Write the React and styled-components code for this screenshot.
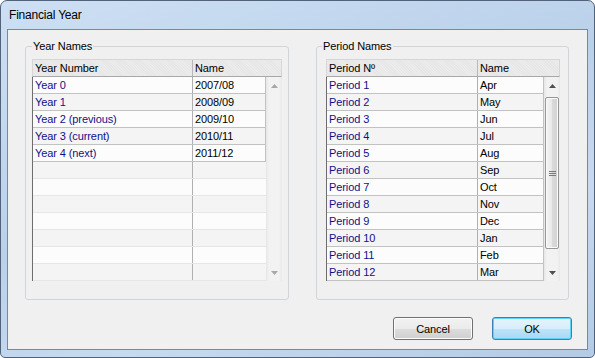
import React from "react";
import styled, { createGlobalStyle } from "styled-components";

const years = [
  ["Year 0", "2007/08"],
  ["Year 1", "2008/09"],
  ["Year 2 (previous)", "2009/10"],
  ["Year 3 (current)", "2010/11"],
  ["Year 4 (next)", "2011/12"],
];

const periods = [
  "Apr", "May", "Jun", "Jul", "Aug", "Sep",
  "Oct", "Nov", "Dec", "Jan", "Feb", "Mar",
].map((m, i) => [`Period ${i + 1}`, m]);

export default function App() {
  return (
    <>
      <GlobalStyle />
      <Window>
        <TitleBar>Financial Year</TitleBar>
        <Client>
          <Panels>
            <GroupBox $w={264} $pl={6}>
              <Legend $ml={0}>Year Names</Legend>
              <Grid
                width={250}
                cols={[160, 73]}
                head={["Year Number", "Name"]}
                rows={years}
              />
            </GroupBox>
            <GroupBox $w={253} $pl={9}>
              <Legend $ml={-4}>Period Names</Legend>
              <Grid
                width={234}
                cols={[151, 66]}
                head={["Period Nº", "Name"]}
                rows={periods}
                thumb
              />
            </GroupBox>
          </Panels>
          <Buttons>
            <Button type="button">Cancel</Button>
            <Button type="button" $default>
              OK
            </Button>
          </Buttons>
        </Client>
      </Window>
    </>
  );
}

function Grid({ width, cols, head, rows, thumb }) {
  const lines = Array.from({ length: 12 }, (_, i) => rows[i] || null);
  return (
    <Table $w={width}>
      <HeaderRow>
        <HeadCell $w={cols[0]}>{head[0]}</HeadCell>
        <HeadCell $last>{head[1]}</HeadCell>
      </HeaderRow>
      <Body>
        <Rows>
          {lines.map((r, i) => (
            <Row key={i} $odd={i % 2 === 1} $filled={!!r}>
              <Cell $w={cols[0]} $key $line>
                {r ? r[0] : ""}
              </Cell>
              <Cell $w={cols[1]} $line={!!r}>
                {r ? r[1] : ""}
              </Cell>
            </Row>
          ))}
        </Rows>
        <ScrollBar>
          <Arrow $active={thumb}>
            <svg width="7" height="4" viewBox="0 0 7 4">
              <path d="M0 4 L3.5 0 L7 4 Z" fill="currentColor" />
            </svg>
          </Arrow>
          <Track>
            {thumb && (
              <Thumb>
                <svg width="7" height="5" viewBox="0 0 7 5">
                  <path d="M0 0.5 H7 M0 2.5 H7 M0 4.5 H7" stroke="#7a7a7a" strokeWidth="1" />
                </svg>
              </Thumb>
            )}
          </Track>
          <Arrow $active={thumb}>
            <svg width="7" height="4" viewBox="0 0 7 4">
              <path d="M0 0 L7 0 L3.5 4 Z" fill="currentColor" />
            </svg>
          </Arrow>
        </ScrollBar>
      </Body>
    </Table>
  );
}

const GlobalStyle = createGlobalStyle`
  html, body {
    margin: 0;
    padding: 0;
    background: #ffffff;
  }
  body {
    font-family: "Liberation Sans", Arial, sans-serif;
    font-size: 11px;
    color: #000;
  }
  * {
    box-sizing: border-box;
  }
`;

const Window = styled.div`
  width: 595px;
  height: 358px;
  display: flex;
  flex-direction: column;
  border: 1px solid #52627a;
  border-radius: 7px 7px 5px 5px;
  background: linear-gradient(160deg, #cddff3 0%, #bad1ea 45%, #c6daef 70%, #b3cbe6 100%);
  overflow: hidden;
`;

const TitleBar = styled.div`
  height: 28px;
  flex: none;
  display: flex;
  align-items: center;
  padding: 0 0 1px 8px;
  font-size: 12px;
  letter-spacing: -0.2px;
`;

const Client = styled.div`
  flex: 1;
  display: flex;
  flex-direction: column;
  margin: 0 6px 7px;
  padding: 10px 15px 0 17px;
  border: 1px solid #7589a2;
  background: #f0f0f0;
`;

const Panels = styled.div`
  display: flex;
  gap: 27px;
`;

const GroupBox = styled.fieldset`
  width: ${(p) => p.$w}px;
  height: 260px;
  margin: 0;
  padding: 6px 0 0 ${(p) => p.$pl}px;
  border: 1px solid #d0d5d9;
  border-radius: 3px;
  min-width: 0;
`;

const Legend = styled.legend`
  margin-left: ${(p) => p.$ml}px;
  padding: 0 1px;
  line-height: 13px;
  letter-spacing: -0.1px;
`;

const Table = styled.div`
  width: ${(p) => p.$w}px;
  display: flex;
  flex-direction: column;
  letter-spacing: -0.1px;
`;

const HeaderRow = styled.div`
  display: flex;
  height: 18px;
  border: 1px solid #d6d6d6;
  border-bottom-color: #a8a8a8;
  background-color: #e9e9e9;
  background-image: repeating-linear-gradient(45deg, #e6e6e6 0 1px, #ececec 1px 2px);
`;

const HeadCell = styled.div`
  ${(p) => (p.$last ? "flex: 1;" : `width: ${p.$w}px;`)}
  padding-left: 2px;
  line-height: 16px;
  ${(p) => (p.$last ? "" : "border-right: 1px solid #b8b8b8;")}
`;

const Body = styled.div`
  display: flex;
  height: 204px;
  border-left: 1px solid #6e6e6e;
`;

const Rows = styled.div`
  display: flex;
  flex-direction: column;
`;

const Row = styled.div`
  display: flex;
  height: 17px;
  border-bottom: 1px solid ${(p) => (p.$filled ? "#c2c2c2" : "#e6e6e6")};
  background: ${(p) => (p.$odd ? "#f4f4f4" : "#fcfcfc")};
`;

const Cell = styled.div`
  width: ${(p) => p.$w}px;
  padding: 0 2px;
  line-height: 16px;
  white-space: nowrap;
  color: ${(p) => (p.$key ? "#10108a" : "#000")};
  border-right: 1px solid ${(p) => (p.$line ? (p.$key ? "#b0b0b0" : "#c2c2c2") : "transparent")};
`;

const ScrollBar = styled.div`
  width: 16px;
  display: flex;
  flex-direction: column;
  background: linear-gradient(90deg, #e6e6e6 0, #f2f2f2 3px, #f2f2f2 13px, #e9e9e9 100%);
`;

const Arrow = styled.div`
  height: 17px;
  display: flex;
  align-items: center;
  justify-content: center;
  color: ${(p) => (p.$active ? "#505050" : "#a8a8a8")};
`;

const Track = styled.div`
  flex: 1;
  padding-top: 3px;
`;

const Thumb = styled.div`
  height: 152px;
  margin: 0 1px;
  display: flex;
  align-items: center;
  justify-content: center;
  border: 1px solid #979797;
  border-radius: 2px;
  background: linear-gradient(90deg, #f4f4f4 0%, #e8e8e8 50%, #dadada 51%, #d2d2d2 100%);
  box-shadow: inset 0 0 0 1px #fafafa;
`;

const Buttons = styled.div`
  display: flex;
  justify-content: flex-end;
  gap: 19px;
  margin-top: 17px;
`;

const Button = styled.button`
  width: 80px;
  height: 23px;
  padding: 0;
  font-family: "Liberation Sans", Arial, sans-serif;
  font-size: 11px;
  letter-spacing: -0.1px;
  color: #000;
  border-radius: 3px;
  border: 1px solid ${(p) => (p.$default ? "#3c7fb1" : "#707070")};
  background: ${(p) =>
    p.$default
      ? "linear-gradient(180deg, #e5f4fc 0%, #d7eefb 50%, #bde4f9 51%, #a7d8f3 100%)"
      : "linear-gradient(180deg, #f2f2f2 0%, #ebebeb 50%, #dddddd 51%, #cfcfcf 100%)"};
  box-shadow: inset 0 0 0 1px ${(p) => (p.$default ? "#5fd3f7" : "#fcfcfc")};
`;
